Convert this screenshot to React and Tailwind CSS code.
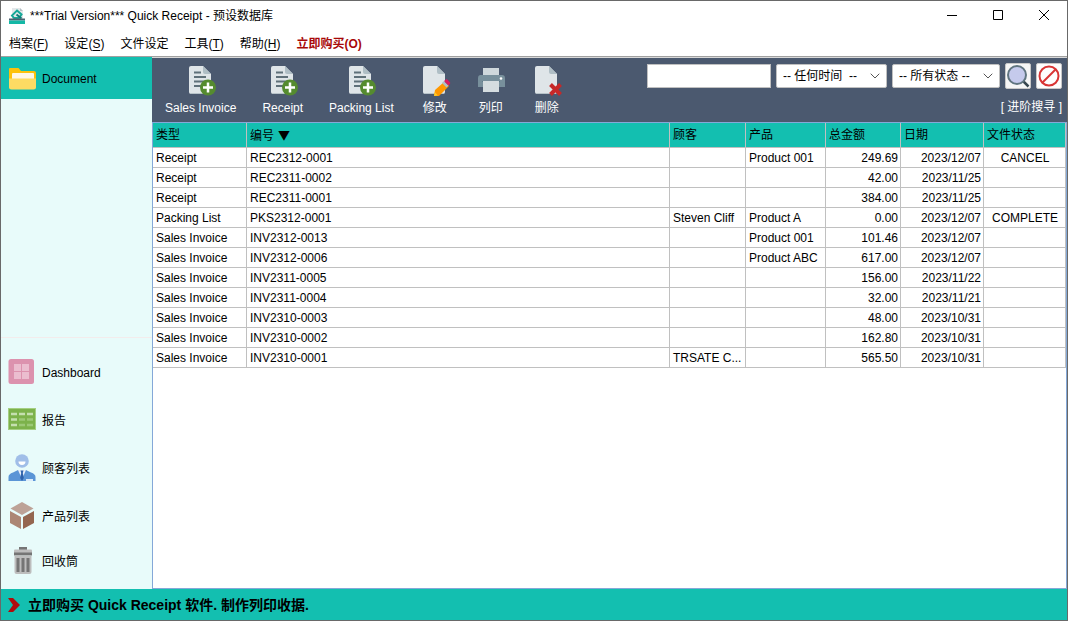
import { useState } from "react";
import { ChevronDown } from "lucide-react";

const menus = [
  { label: "档案", key: "F" },
  { label: "设定", key: "S" },
  { label: "文件设定" },
  { label: "工具", key: "T" },
  { label: "帮助", key: "H" },
];

const rows = [
  ["Receipt", "REC2312-0001", "", "Product 001", "249.69", "2023/12/07", "CANCEL"],
  ["Receipt", "REC2311-0002", "", "", "42.00", "2023/11/25", ""],
  ["Receipt", "REC2311-0001", "", "", "384.00", "2023/11/25", ""],
  ["Packing List", "PKS2312-0001", "Steven Cliff", "Product A", "0.00", "2023/12/07", "COMPLETE"],
  ["Sales Invoice", "INV2312-0013", "", "Product 001", "101.46", "2023/12/07", ""],
  ["Sales Invoice", "INV2312-0006", "", "Product ABC", "617.00", "2023/12/07", ""],
  ["Sales Invoice", "INV2311-0005", "", "", "156.00", "2023/11/22", ""],
  ["Sales Invoice", "INV2311-0004", "", "", "32.00", "2023/11/21", ""],
  ["Sales Invoice", "INV2310-0003", "", "", "48.00", "2023/10/31", ""],
  ["Sales Invoice", "INV2310-0002", "", "", "162.80", "2023/10/31", ""],
  ["Sales Invoice", "INV2310-0001", "TRSATE C...", "", "565.50", "2023/10/31", ""],
];

const columns = [
  { label: "类型", width: "w-[94px]", cell: "text-left" },
  { label: "编号", width: "", cell: "text-left" },
  { label: "顾客", width: "w-[76px]", cell: "text-left" },
  { label: "产品", width: "w-[80px]", cell: "text-left" },
  { label: "总金额", width: "w-[75px]", cell: "text-right" },
  { label: "日期", width: "w-[83px]", cell: "text-right" },
  { label: "文件状态", width: "w-[82px]", cell: "text-center" },
];

function LogoIcon() {
  return (
    <svg viewBox="0 0 16 16" className="h-4 w-4" aria-hidden="true">
      <path d="M3 0h8l3 3v9H3z" fill="#e4e8ea" />
      <path d="M11 0v3h3z" fill="#b4bec4" />
      <path d="M8 2.500L12.500 6.500 10 10H5L3 7.500z" fill="none" stroke="#14a898" strokeWidth="2" />
      <path d="M7.500 6.500l5 4" stroke="#0c7f78" strokeWidth="2" />
      <rect x="0" y="10.500" width="16" height="2" fill="#4b6070" />
      <rect x="0" y="12.500" width="16" height="3.500" fill="#14b8a6" />
    </svg>
  );
}

function Page() {
  return (
    <>
      <path d="M5 2h12l8 8v18a2 2 0 0 1-2 2H5a2 2 0 0 1-2-2V4a2 2 0 0 1 2-2z" fill="#dfe5e8" />
      <path d="M17 2l8 8h-6a2 2 0 0 1-2-2z" fill="#afbec5" />
      <path d="M4 29.500h20" stroke="#b6c2c8" />
    </>
  );
}

function AddDocIcon() {
  return (
    <svg viewBox="-1 0 32 32" className="-mx-px h-8 w-8" aria-hidden="true">
      <Page />
      <path d="M8 8.500h7M8 13h12M8 17.500h12M8 22h8" stroke="#5f7079" strokeWidth="2" />
      <circle cx="22" cy="23.500" r="8" fill="#558b2f" />
      <path d="M22 18.500v10M17 23.500h10" stroke="#fff" strokeWidth="2.500" />
    </svg>
  );
}

function EditIcon() {
  return (
    <svg viewBox="-1 0 32 32" className="-mx-px h-8 w-8" aria-hidden="true">
      <Page />
      <path d="M14 32l1-6 9-8 5 4-10 10z" fill="#ff9800" />
      <path d="M14 32l.7-4 3.300 3.500z" fill="#ffc928" />
      <path d="M22 19l2-2 4.500 4.500-2 2z" fill="#b0bec5" />
      <path d="M24 17l1.800-1.400q1-.6 1.800.2l2.300 2.400q.8.9 0 1.700L28.500 21.500z" fill="#d81b60" />
    </svg>
  );
}

function PrintIcon() {
  return (
    <svg viewBox="0 0 32 32" className="-mx-px h-8 w-8" aria-hidden="true">
      <path d="M5 11h22a3 3 0 0 1 3 3v9H3v-9a3 3 0 0 1 2-3z" fill="#78909c" />
      <path d="M7 17h18v1H7z" fill="#607d8b" />
      <path d="M8 4h16v7H8z" fill="#cfd8dc" />
      <path d="M8 17h16v11H8z" fill="#d5dde0" />
      <circle cx="26" cy="14.500" r="1.300" fill="#fff" />
    </svg>
  );
}

function DeleteIcon() {
  return (
    <svg viewBox="-1 0 32 32" className="-mx-px h-8 w-8" aria-hidden="true">
      <Page />
      <path d="M18.500 20.500l10 10M28.500 20.500l-10 10" stroke="#c62828" strokeWidth="4" />
    </svg>
  );
}

function FolderIcon() {
  return (
    <svg viewBox="0 0 28 24" className="h-6 w-7" aria-hidden="true">
      <path d="M2 1h8.500l2.500 3h13a2 2 0 0 1 2 2v15H1V2a1 1 0 0 1 1-1z" fill="#fdc20c" />
      <path d="M5 6h20a1 1 0 0 1 1 1v6H4V7a1 1 0 0 1 1-1z" fill="#fff7e6" />
      <path d="M1 11.500h27V20a2.500 2.500 0 0 1-2.500 2.500h-22A2.500 2.500 0 0 1 1 20z" fill="#fddb63" />
    </svg>
  );
}

function DashboardIcon() {
  return (
    <svg viewBox="0 0 28 28" className="mb-0.5 h-7 w-7" aria-hidden="true">
      <rect x="0.500" y="1" width="25.500" height="25" rx="2.500" fill="#dc92ae" />
      <path d="M6 6h7v7H6zM14 6h7v7h-7zM6 14h7v7H6zM14 14h7v7h-7z" fill="#ebbdcf" />
    </svg>
  );
}

function ReportIcon() {
  return (
    <svg viewBox="0 0 28 28" className="mb-0.5 h-7 w-7" aria-hidden="true">
      <rect x="0.500" y="2.500" width="27" height="21" fill="#7cb24b" stroke="#a5cf83" />
      <path d="M3 8h6M11 8h6M19 8h6M3 13.500h6M3 19h6" stroke="#c5e0b0" strokeWidth="2.500" />
      <path d="M11 13.500h6M19 13.500h6M11 19h6M19 19h6" stroke="#9cc977" strokeWidth="2.500" />
    </svg>
  );
}

function CustomerIcon() {
  return (
    <svg viewBox="0 0 28 28" className="mb-0.5 h-7 w-7" aria-hidden="true">
      <circle cx="14" cy="7" r="6.800" fill="#a0bee8" />
      <path d="M10.500 7.500h7a3.500 3.500 0 0 1-7 0z" fill="#fff" />
      <path d="M0.500 27v-4q0-3 4.500-4.500L10 16h8l5 2.500q4.500 1.500 4.500 4.500v4z" fill="#5b95d6" />
      <path d="M10 16h8l-4 9z" fill="#e4eefb" />
      <path d="M12.500 16.500h3l-.7 2.500 1 5-1.800 3-1.800-3 1-5z" fill="#2e62ac" />
      <path d="M18 25h7v2h-7z" fill="#dcebfa" />
    </svg>
  );
}

function ProductIcon() {
  return (
    <svg viewBox="0 0 28 28" className="mb-0.5 h-7 w-7" aria-hidden="true">
      <path d="M14 0l11.500 6.500L14 13 2.500 6.500z" fill="#bda297" />
      <path d="M2 9l11 6v12L2 21z" fill="#ac8674" />
      <path d="M26 9l-11 6v12l11-6z" fill="#946650" />
    </svg>
  );
}

function TrashIcon() {
  return (
    <svg viewBox="0 0 28 28" className="mb-0.5 h-7 w-7" aria-hidden="true">
      <path d="M11 0h8v3h-8z" fill="#757575" />
      <path d="M7 2.500h16a1 1 0 0 1 1 1V6H6V3.500a1 1 0 0 1 1-1z" fill="#bdbdbd" />
      <path d="M6 5.500h18v3H6z" fill="#757575" />
      <path d="M6.500 8.500h17V25a2 2 0 0 1-2 2h-13a2 2 0 0 1-2-2z" fill="#bdbdbd" />
      <path d="M10 11v14M15 11v14M20 11v14" stroke="#757575" strokeWidth="3" />
    </svg>
  );
}

const tools = [
  { label: "Sales Invoice", icon: AddDocIcon },
  { label: "Receipt", icon: AddDocIcon },
  { label: "Packing List", icon: AddDocIcon },
  { label: "修改", icon: EditIcon },
  { label: "列印", icon: PrintIcon },
  { label: "删除", icon: DeleteIcon },
];

const links = [
  { label: "Dashboard", icon: DashboardIcon },
  { label: "报告", icon: ReportIcon },
  { label: "顾客列表", icon: CustomerIcon },
  { label: "产品列表", icon: ProductIcon },
];

function TitleBar() {
  return (
    <header className="flex h-[30px] items-center pl-2">
      <LogoIcon />
      <h1 className="ml-[5px] flex-1">***Trial Version*** Quick Receipt - 预设数据库</h1>
      <button aria-label="Minimize" className="flex h-full w-[46px] items-center justify-center">
        <svg viewBox="0 0 12 12" className="h-3 w-3" stroke="#000" fill="none">
          <path d="M1 5.500h10" />
        </svg>
      </button>
      <button aria-label="Maximize" className="flex h-full w-[46px] items-center justify-center">
        <svg viewBox="0 0 12 12" className="h-3 w-3" stroke="#000" fill="none">
          <path d="M1.500 0.500h9v9h-9z" />
        </svg>
      </button>
      <button aria-label="Close" className="flex h-full w-[46px] items-center justify-center">
        <svg viewBox="0 0 12 12" className="h-3 w-3" stroke="#000" fill="none">
          <path d="M1 0l10 10M11 0L1 10" />
        </svg>
      </button>
    </header>
  );
}

function MenuBar() {
  return (
    <nav className="flex h-[26px] items-center gap-4 border-b border-[#a0a0a0] px-2">
      {menus.map((menu) => (
        <button key={menu.label}>
          {menu.label}
          {menu.key && (
            <>
              (<span className="underline underline-offset-2">{menu.key}</span>)
            </>
          )}
        </button>
      ))}
      <button className="font-bold text-[#a80808]">立即购买(O)</button>
    </nav>
  );
}

function Sidebar() {
  return (
    <aside className="flex w-[151px] shrink-0 flex-col bg-[#e8fbfa]">
      <button className="flex h-[42px] items-center gap-1.5 bg-[#13bfb0] px-[7px] pt-0.5 text-left">
        <FolderIcon />
        Document
      </button>
      <div className="mt-auto flex flex-col border-t border-[#f3ecec] pt-[11px] pb-1.5">
        {links.map(({ label, icon: Icon }) => (
          <button key={label} className="flex h-12 items-center gap-1.5 px-[7px] text-left">
            <Icon />
            {label}
          </button>
        ))}
        <button className="flex h-[42px] items-center gap-1.5 px-[7px] text-left">
          <TrashIcon />
          回收筒
        </button>
      </div>
    </aside>
  );
}

function Filter({ label, value, onChange, children, className }) {
  return (
    <div className={`relative ${className}`}>
      <select
        aria-label={label}
        value={value}
        onChange={(e) => onChange(e.target.value)}
        className="h-6 w-full appearance-none rounded-xs border border-[#c0c0c0] bg-white pl-1.5"
      >
        {children}
      </select>
      <ChevronDown
        strokeWidth={1.5}
        className="pointer-events-none absolute top-1 right-1 h-4 w-4 text-[#555]"
      />
    </div>
  );
}

function Toolbar() {
  const [query, setQuery] = useState("");
  const [time, setTime] = useState("any");
  const [state, setState] = useState("all");

  return (
    <div className="flex h-16 bg-[#4b596f] text-white">
      <div className="flex flex-1">
        {tools.map(({ label, icon: Icon }) => (
          <button
            key={label}
            className="flex min-w-14 flex-col items-center px-[13px] pt-1.5 whitespace-nowrap"
          >
            <Icon />
            <span className="mt-0.5 leading-5">{label}</span>
          </button>
        ))}
      </div>
      <div className="flex flex-col items-end gap-2 pt-[5px] pr-[5px]">
        <div className="flex gap-[5px] text-black">
          <input
            type="text"
            aria-label="搜寻"
            value={query}
            onChange={(e) => setQuery(e.target.value)}
            className="mt-px h-6 w-[124px] border border-[#c0c0c0] bg-white px-1"
          />
          <Filter label="时间" value={time} onChange={setTime} className="mt-px w-[111px]">
            <option value="any">-- 任何时间&nbsp; --</option>
          </Filter>
          <Filter label="状态" value={state} onChange={setState} className="mt-px w-[108px]">
            <option value="all">-- 所有状态 --</option>
          </Filter>
          <button
            aria-label="搜寻"
            className="flex h-[26px] w-[26px] items-center justify-center rounded-xs border border-[#c8c8c8] bg-[#f6f6f6]"
          >
            <svg viewBox="0 0 24 24" className="h-6 w-6" fill="none">
              <path d="M17 17l5.500 5.500" stroke="#37474f" strokeWidth="2.500" />
              <circle cx="11" cy="11" r="9" fill="#c5caec" stroke="#607580" strokeWidth="2" />
            </svg>
          </button>
          <button
            aria-label="清除"
            className="flex h-[26px] w-[26px] items-center justify-center rounded-xs border border-[#c8c8c8] bg-[#fdfdfd]"
          >
            <svg viewBox="0 0 24 24" className="h-6 w-6" fill="none" stroke="#d83434" strokeWidth="2">
              <circle cx="12" cy="12" r="9.500" />
              <path d="M18.500 5.500l-13 13" />
            </svg>
          </button>
        </div>
        <a href="#search" className="leading-5">
          [ 进阶搜寻 ]
        </a>
      </div>
    </div>
  );
}

function DocumentTable() {
  return (
    <div className="flex-1 border border-[#84a8d8] bg-white">
      <table className="w-full table-fixed border-separate border-spacing-0">
        <thead>
          <tr className="h-[25px] bg-[#13bfb0]">
            {columns.map((col) => (
              <th
                key={col.label}
                className={`border-r border-b border-[#c0c0c0] px-[3px] py-0 text-left font-normal whitespace-nowrap ${col.width}`}
              >
                {col.label}
                {col.label === "编号" && (
                  <span className="ml-1 font-['Noto_Sans_CJK_SC',sans-serif]">▼</span>
                )}
              </th>
            ))}
          </tr>
        </thead>
        <tbody>
          {rows.map((row) => (
            <tr key={row[1]} className="h-5">
              {row.map((value, i) => (
                <td
                  key={columns[i].label}
                  className={`border-r border-b border-[#c0c0c0] pt-0.5 pr-0.5 pb-0 pl-[3px] leading-[17px] whitespace-nowrap ${columns[i].cell}`}
                >
                  {value}
                </td>
              ))}
            </tr>
          ))}
        </tbody>
      </table>
    </div>
  );
}

export default function App() {
  return (
    <div className="flex min-h-screen flex-col border border-[#696969] bg-white font-['Liberation_Sans','Noto_Sans_CJK_SC',sans-serif] text-xs text-black">
      <TitleBar />
      <MenuBar />
      <div className="flex flex-1">
        <Sidebar />
        <main className="flex min-w-0 flex-1 flex-col border-t border-[#d8d8d8]">
          <Toolbar />
          <DocumentTable />
        </main>
      </div>
      <footer className="flex h-[31px] items-center bg-[#13bfb0] px-[7px]">
        <svg viewBox="0 0 12 14" className="h-3.5 w-3" aria-hidden="true">
          <path d="M0 0h5l7 7-7 7H0l5-7z" fill="#b00c0c" />
        </svg>
        <a href="#buy" className="ml-2 text-sm font-bold">
          立即购买 Quick Receipt 软件. 制作列印收据.
        </a>
      </footer>
    </div>
  );
}
